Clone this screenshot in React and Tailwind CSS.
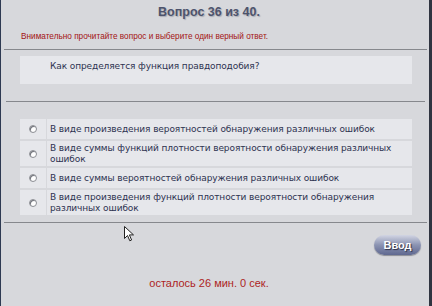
import React from 'react';

const answers = [
  'В виде произведения вероятностей обнаружения различных ошибок',
  'В виде суммы функций плотности вероятности обнаружения различных ошибок',
  'В виде суммы вероятностей обнаружения различных ошибок',
  'В виде произведения функций плотности вероятности обнаружения различных ошибок',
];

function Radio() {
  return (
    <span className="block w-[8px] h-[8px] rounded-full border border-[#8e9096] bg-[radial-gradient(circle_at_60%_60%,#ffffff_40%,#d4d6dc)] shadow-[inset_1px_1px_0_#6d7077]" />
  );
}

function Cursor() {
  return (
    <svg className="absolute left-[123px] top-[226px]" width="11" height="17" viewBox="0 0 11 17">
      <path
        d="M0.5 0.5 L0.5 12.5 L3.5 9.5 L5.8 14.8 L7.6 14 L5.4 8.9 L9.5 8.9 Z"
        fill="#ffffff"
        stroke="#222"
        strokeWidth="1"
      />
    </svg>
  );
}

export default function App() {
  return (
    <div className="relative w-[432px] h-[306px] overflow-hidden bg-[#d7d8dc] border-l border-l-[#2e3a52] border-r-[3px] border-r-[#2f3440] flex flex-col">
      {/* header */}
      <h1
        className="pt-[5px] pr-[12px] text-center text-[12.5px] leading-[14px] font-bold text-[#4d536c] [text-shadow:1px_1px_1px_#a9abb4]"
        style={{ fontFamily: '"Liberation Sans", Arial, sans-serif' }}
      >
        Вопрос 36 из 40.
      </h1>
      <p
        className="mt-[11px] pl-[20px] h-[12px] text-[9.5px] leading-[12px] text-[#a31414] whitespace-nowrap"
        style={{ fontFamily: '"Liberation Sans", Arial, sans-serif' }}
      >
        <span className="inline-block origin-left scale-x-[0.866]">
          Внимательно прочитайте вопрос и выберите один верный ответ.
        </span>
      </p>
      <div className="mt-[7px] ml-[3px] mr-[2px] h-px bg-[#86888d]" />

      {/* question */}
      <div
        className="mt-[6px] ml-[19px] mr-[17px] h-[28px] bg-[#e6e7eb] pt-[5px] pl-[30px] text-[9px] leading-[11px] tracking-[-0.1px] text-[#2d3250]"
        style={{ fontFamily: '"DejaVu Sans", Verdana, sans-serif' }}
      >
        Как определяется функция правдоподобия?
      </div>
      <div className="mt-[17px] ml-[5px] mr-[4px] h-px bg-[#86888d]" />

      {/* answers */}
      <div
        className="mt-[17px] ml-[19px] mr-[17px] flex flex-col gap-[2px] text-[9px] leading-[11px] tracking-[-0.1px] text-[#2d3250]"
        style={{ fontFamily: '"DejaVu Sans", Verdana, sans-serif' }}
      >
        {answers.map((a, i) => (
          <div key={i} className="flex gap-px">
            <div className="w-[26px] shrink-0 bg-[#e6e7eb] flex items-center justify-center">
              <Radio />
            </div>
            <div className="flex-1 bg-[#e6e7eb] min-h-[20px] flex items-center pl-[3px] pr-[4px] py-[1.5px]">
              {a}
            </div>
          </div>
        ))}
      </div>
      <div className="mt-[7px] ml-[3px] mr-[2px] h-px bg-[#86888d]" />

      {/* submit */}
      <div className="mt-[12px] flex justify-end pr-[8px]">
        <button
          className="w-[47px] h-[20px] rounded-full bg-linear-to-b from-[#d2d5e3] via-[#8b93b2] to-[#5f6890] shadow-[0_1px_1px_#8a8c94] text-white text-[11px] font-bold leading-none [text-shadow:1px_1px_1px_#2a2f45]"
          style={{ fontFamily: '"Liberation Sans", Arial, sans-serif' }}
        >
          Ввод
        </button>
      </div>

      {/* timer */}
      <p
        className="mt-[22px] pr-[12px] text-center text-[11px] leading-[12px] text-[#ad1f24]"
        style={{ fontFamily: '"Liberation Sans", Arial, sans-serif' }}
      >
        осталось 26 мин. 0 сек.
      </p>

      <Cursor />
    </div>
  );
}
